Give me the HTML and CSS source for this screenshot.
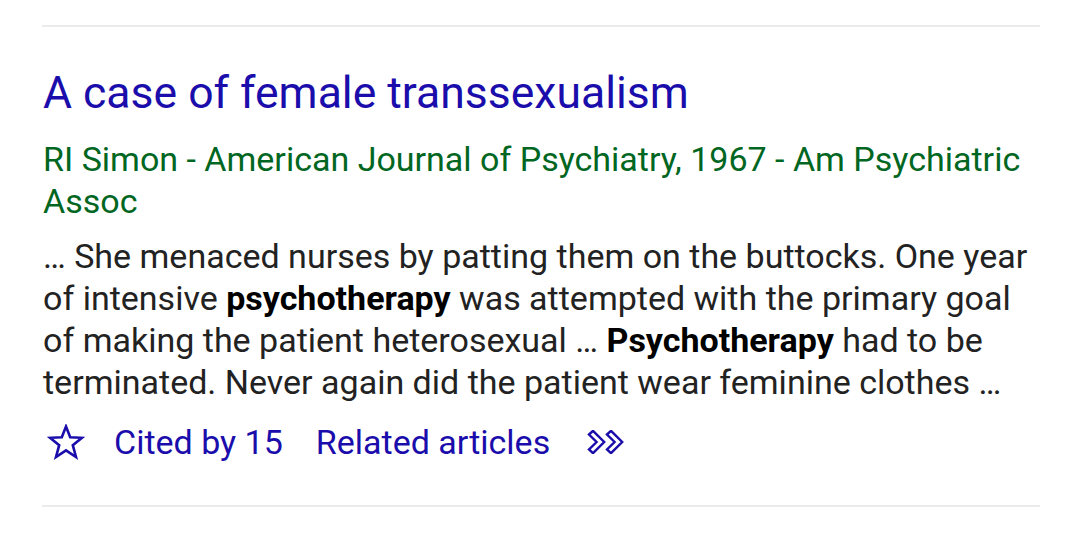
FILE: index.html
```html
<!DOCTYPE html>
<html>
<head>
<meta charset="utf-8">
<link rel="stylesheet" href="styles.css">
</head>
<body>
<div class="result">
  <h3 class="title"><a href="#">A case of female transsexualism</a></h3>
  <div class="authors">RI Simon - American Journal of Psychiatry, 1967 - Am Psychiatric Assoc</div>
  <div class="snippet">… She menaced nurses by patting them on the buttocks. One year of intensive <b>psychotherapy</b> was attempted with the primary goal of making the patient heterosexual … <b>Psychotherapy</b> had to be terminated. Never again did the patient wear feminine clothes …</div>
  <div class="links">
    <a href="#" class="icon star" aria-label="Save">
      <svg width="38" height="36" viewBox="0 0 38 36"><polygon points="19,2.5 23.2,13.2 35,13.8 25.8,21.2 29,33 19,26.4 9,33 12.2,21.2 3,13.8 14.8,13.2" fill="none" stroke="#1a0dab" stroke-width="2.6" stroke-linejoin="miter"/></svg>
    </a>
    <a href="#" class="link">Cited by 15</a>
    <a href="#" class="link">Related articles</a>
    <a href="#" class="icon more" aria-label="More">
      <svg width="40" height="24" viewBox="0 0 40 24"><path d="M2,4.5 L6,0.8 L17.2,12 L6,23.2 L2,19.5 L9.6,12 Z" fill="none" stroke="#1a0dab" stroke-width="2.4" stroke-linejoin="miter"/><path d="M20,4.5 L24,0.8 L35.2,12 L24,23.2 L20,19.5 L27.6,12 Z" fill="none" stroke="#1a0dab" stroke-width="2.4" stroke-linejoin="miter"/></svg>
    </a>
  </div>
</div>
</body>
</html>
```
FILE: styles.css
```css
html, body {
  margin: 0;
  padding: 0;
  background: #fff;
}
body {
  font-family: Roboto, "Liberation Sans", Arial, sans-serif;
}
.result {
  margin: 25px 33px 0 42px;
  border-top: 2px solid #ebebeb;
  border-bottom: 2px solid #ebebeb;
  padding: 39px 0 42px 1px;
}
.title {
  margin: 0;
  font-size: 44.5px;
  font-weight: 400;
  line-height: 54px;
}
.title a {
  color: #1a0dab;
  text-decoration: none;
}
.authors {
  margin-top: 18px;
  color: #006621;
  font-size: 34px;
  line-height: 42px;
}
.snippet {
  margin-top: 13px;
  color: #222;
  font-size: 34px;
  line-height: 42px;
}
.snippet b {
  font-weight: 700;
  color: #000;
}
.links {
  margin-top: 18px;
  display: flex;
  align-items: center;
  height: 42px;
  font-size: 34px;
}
.links a {
  color: #1a0dab;
  text-decoration: none;
}
.icon {
  display: flex;
  align-items: center;
}
.star {
  margin-left: 4px;
  margin-right: 29px;
}
.link {
  margin-right: 33px;
}
.more {
  margin-left: 4px;
}
```
